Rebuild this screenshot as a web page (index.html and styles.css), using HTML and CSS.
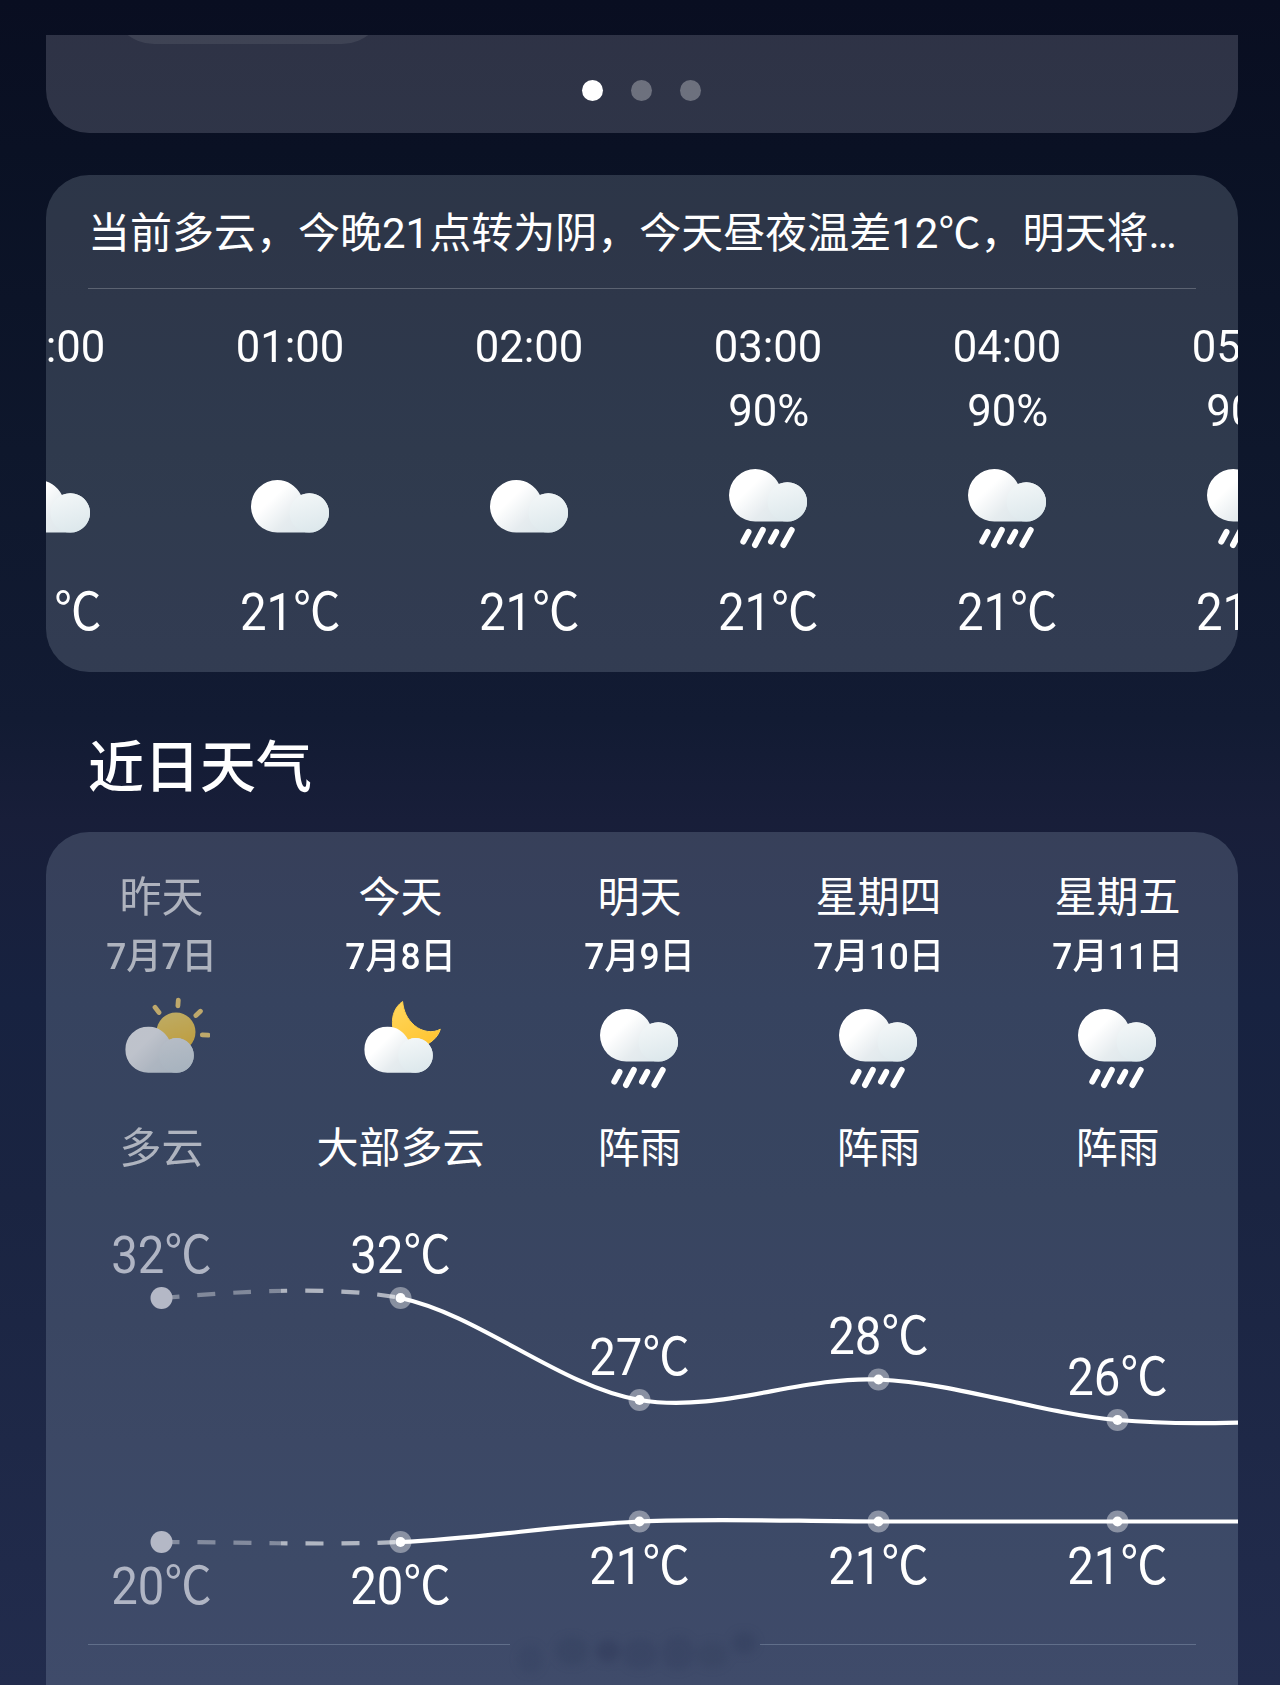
FILE: index.html
```html
<!DOCTYPE html>
<html lang="zh-CN">
<head>
  <meta charset="UTF-8">
  <meta name="viewport" content="width=device-width, initial-scale=1.0">
  <title>天气</title>
  <link rel="stylesheet" href="styles.css">
</head>
<body>
  <!-- Shared icon shapes -->
  <svg class="defs" width="0" height="0" aria-hidden="true">
    <defs>
      <linearGradient id="cloud-back" x1="0" y1="0.1" x2="1" y2="0.8">
        <stop offset="0.3" stop-color="#ffffff"/>
        <stop offset="0.62" stop-color="#e6ecef"/>
        <stop offset="1" stop-color="#d9e5ea"/>
      </linearGradient>
      <linearGradient id="cloud-front" x1="0.2" y1="0" x2="0.5" y2="1">
        <stop offset="0" stop-color="#f3f7f8"/>
        <stop offset="1" stop-color="#dde8ec"/>
      </linearGradient>
      <linearGradient id="moon-fill" x1="0" y1="0" x2="0.6" y2="1">
        <stop offset="0" stop-color="#ffd75e"/>
        <stop offset="1" stop-color="#ffc533"/>
      </linearGradient>
      <linearGradient id="sun-fill" x1="0" y1="0" x2="0.3" y2="1">
        <stop offset="0" stop-color="#ffdf6b"/>
        <stop offset="1" stop-color="#ffc933"/>
      </linearGradient>
      <linearGradient id="dash-fade" gradientUnits="userSpaceOnUse" x1="0" y1="0" x2="470" y2="0">
        <stop offset="0.5" stop-color="#fff" stop-opacity="0.36"/>
        <stop offset="0.5" stop-color="#fff" stop-opacity="0.6"/>
      </linearGradient>
      <symbol id="cloud" viewBox="0 0 78 53">
        <path d="M26.3 0a26.3 26.3 0 0 0 0 52.6H58.3a19.7 19.7 0 1 0-8.4-37.5A26.3 26.3 0 0 0 26.3 0z" fill="url(#cloud-back)"/>
        <circle cx="58.3" cy="32.9" r="19.7" fill="url(#cloud-front)"/>
      </symbol>
      <symbol id="icon-cloudy" viewBox="0 0 96 96">
        <use href="#cloud" x="8" y="26" width="78" height="53"/>
      </symbol>
      <symbol id="icon-rain" viewBox="0 0 96 96">
        <use href="#cloud" x="8" y="15" width="78" height="53"/>
        <path d="M27.5 78l-5.200 9.700M41.800 76l-7.800 15M55.200 78l-5.200 9.700M70.700 76l-8.300 15" stroke="#fff" stroke-width="6" stroke-linecap="round"/>
      </symbol>
      <symbol id="icon-night" viewBox="0 0 96 96">
        <path d="M49.600 7.500C42 13 38.800 21 39.500 31C41 48 54 55 67 53C78 50 85 43 87.300 35.200C80 39.500 69 38 61.500 31.500C54 25 50.500 17 49.600 7.500z" fill="url(#moon-fill)" stroke="#ffcf4a" stroke-width="1" stroke-linejoin="round"/>
        <use href="#cloud" x="11.200" y="32.500" width="68.700" height="46.600"/>
      </symbol>
      <symbol id="icon-day" viewBox="0 0 96 96">
        <circle cx="62" cy="38" r="19.500" fill="url(#sun-fill)"/>
        <path d="M64.300 6.200l-.4 5.600M41 13.300l4 5.200M86.400 17.200l-4.500 4.300M88.300 40.900l5.800.3" stroke="#ffd972" stroke-width="4.800" stroke-linecap="round"/>
        <use href="#cloud" x="11.200" y="32.500" width="68.700" height="46.600"/>
      </symbol>
    </defs>
  </svg>

  <section class="card card-top">
    <div class="pill"></div>
    <div class="dots">
      <span class="dot active"></span>
      <span class="dot"></span>
      <span class="dot"></span>
    </div>
  </section>

  <!-- Hourly forecast -->
  <section class="card card-hourly">
    <p class="summary">当前多云，今晚21点转为阴，今天昼夜温差12℃，明天将…</p>
    <div class="hours">
      <div class="hour">
        <div class="time">00:00</div>
        <div class="chance"></div>
        <svg class="icon"><use href="#icon-cloudy"/></svg>
        <div class="temp">21℃</div>
      </div>
      <div class="hour">
        <div class="time">01:00</div>
        <div class="chance"></div>
        <svg class="icon"><use href="#icon-cloudy"/></svg>
        <div class="temp">21℃</div>
      </div>
      <div class="hour">
        <div class="time">02:00</div>
        <div class="chance"></div>
        <svg class="icon"><use href="#icon-cloudy"/></svg>
        <div class="temp">21℃</div>
      </div>
      <div class="hour">
        <div class="time">03:00</div>
        <div class="chance">90%</div>
        <svg class="icon"><use href="#icon-rain"/></svg>
        <div class="temp">21℃</div>
      </div>
      <div class="hour">
        <div class="time">04:00</div>
        <div class="chance">90%</div>
        <svg class="icon"><use href="#icon-rain"/></svg>
        <div class="temp">21℃</div>
      </div>
      <div class="hour">
        <div class="time">05:00</div>
        <div class="chance">90%</div>
        <svg class="icon"><use href="#icon-rain"/></svg>
        <div class="temp">21℃</div>
      </div>
    </div>
  </section>

  <h2>近日天气</h2>

  <!-- Daily forecast -->
  <section class="card card-daily">
    <div class="days">
      <div class="day past">
        <div class="name">昨天</div>
        <div class="date">7月7日</div>
        <svg class="icon"><use href="#icon-day"/></svg>
        <div class="desc">多云</div>
      </div>
      <div class="day">
        <div class="name">今天</div>
        <div class="date">7月8日</div>
        <svg class="icon"><use href="#icon-night"/></svg>
        <div class="desc">大部多云</div>
      </div>
      <div class="day">
        <div class="name">明天</div>
        <div class="date">7月9日</div>
        <svg class="icon"><use href="#icon-rain"/></svg>
        <div class="desc">阵雨</div>
      </div>
      <div class="day">
        <div class="name">星期四</div>
        <div class="date">7月10日</div>
        <svg class="icon"><use href="#icon-rain"/></svg>
        <div class="desc">阵雨</div>
      </div>
      <div class="day">
        <div class="name">星期五</div>
        <div class="date">7月11日</div>
        <svg class="icon"><use href="#icon-rain"/></svg>
        <div class="desc">阵雨</div>
      </div>
    </div>

    <svg class="chart" viewBox="0 0 1192 443">
      <path class="line dashed" d="M115.500 98C155 95 275 83 354.500 98"/>
      <path class="line" d="M354.500 98C434 115 514 186.500 593.500 200S753 176 832.500 179.500S992 213 1071.500 220S1231 220 1310.500 220"/>
      <path class="line dashed" d="M115.500 342C195 342 275 345.400 354.500 342"/>
      <path class="line" d="M354.500 342C434 338.600 514 325 593.500 321.500S753 321.500 832.500 321.500H1192"/>

      <g class="points">
        <circle class="past-dot" cx="115.500" cy="98" r="11"/>
        <circle class="halo" cx="354.500" cy="98" r="11"/><circle cx="354.500" cy="98" r="5"/>
        <circle class="halo" cx="593.500" cy="200" r="11"/><circle cx="593.500" cy="200" r="5"/>
        <circle class="halo" cx="832.500" cy="179.500" r="11"/><circle cx="832.500" cy="179.500" r="5"/>
        <circle class="halo" cx="1071.500" cy="220" r="11"/><circle cx="1071.500" cy="220" r="5"/>
        <circle class="past-dot" cx="115.500" cy="342" r="11"/>
        <circle class="halo" cx="354.500" cy="342" r="11"/><circle cx="354.500" cy="342" r="5"/>
        <circle class="halo" cx="593.500" cy="321.500" r="11"/><circle cx="593.500" cy="321.500" r="5"/>
        <circle class="halo" cx="832.500" cy="321.500" r="11"/><circle cx="832.500" cy="321.500" r="5"/>
        <circle class="halo" cx="1071.500" cy="321.500" r="11"/><circle cx="1071.500" cy="321.500" r="5"/>
      </g>

      <g class="labels">
        <text class="past-label" x="115.500" y="73">32℃</text>
        <text x="354.500" y="73">32℃</text>
        <text x="593.500" y="175">27℃</text>
        <text x="832.500" y="154">28℃</text>
        <text x="1071.500" y="195">26℃</text>
        <text class="past-label" x="115.500" y="404">20℃</text>
        <text x="354.500" y="404">20℃</text>
        <text x="593.500" y="384">21℃</text>
        <text x="832.500" y="384">21℃</text>
        <text x="1071.500" y="384">21℃</text>
      </g>
    </svg>

    <div class="divider">
      <span class="rule"></span>
      <svg class="smudge" viewBox="0 0 250 50">
        <g fill="#2f3a59">
          <ellipse cx="20" cy="30" rx="12" ry="14" opacity=".22"/>
          <ellipse cx="62" cy="22" rx="16" ry="14" opacity=".3"/>
          <ellipse cx="98" cy="22" rx="12" ry="11" opacity=".5"/>
          <ellipse cx="130" cy="25" rx="18" ry="15" opacity=".28"/>
          <ellipse cx="168" cy="24" rx="16" ry="17" opacity=".28"/>
          <ellipse cx="202" cy="26" rx="16" ry="13" opacity=".25"/>
          <ellipse cx="234" cy="14" rx="12" ry="11" opacity=".35"/>
        </g>
      </svg>
      <span class="rule"></span>
    </div>
  </section>
</body>
</html>
```
FILE: styles.css
```css
* {
  box-sizing: border-box;
}
body {
  margin: 0;
  padding: 35px 42px 0 46px;
  height: 1685px;
  overflow: hidden;
  font-family: Roboto, "Noto Sans CJK SC", sans-serif;
  color: #fff;
  background: linear-gradient(#090e21 0, #0a1124 150px, #0e172c 450px, #121b33 720px, #181e39 820px, #172240 1000px, #1a2441 1200px, #222c4d 1685px);
}
.defs {
  position: absolute;
}
.card {
  background: rgba(225,240,255,0.16);
  border-radius: 43px;
  overflow: hidden;
}

/* tail of the card scrolled off the top */
.card-top {
  height: 98px;
  border-radius: 0 0 43px 43px;
  background: rgba(235,235,255,0.165);
}
.pill {
  width: 274px;
  height: 9px;
  margin-left: 65px;
  overflow: hidden;
}
.pill::before {
  content: "";
  display: block;
  height: 86px;
  margin-top: -77px;
  border-radius: 43px;
  background: rgba(255,255,255,0.08);
}
.dots {
  display: flex;
  justify-content: center;
  gap: 28px;
  margin: 36px 1px 0 0;
}
.dot {
  width: 21px;
  height: 21px;
  border-radius: 50%;
  background: rgba(255,255,255,0.3);
}
.dot.active {
  background: #fff;
}

.card-hourly {
  height: 497px;
  margin-top: 42px;
}
.summary {
  margin: 0 42px;
  height: 114px;
  line-height: 117px;
  font-size: 42px;
  white-space: nowrap;
  border-bottom: 1px solid rgba(255,255,255,0.22);
}
.hours {
  display: flex;
  margin-left: -114px;
  padding-top: 28px;
}
.hour, .day {
  flex: 0 0 239px;
  display: flex;
  flex-direction: column;
  align-items: center;
  white-space: nowrap;
}
.time, .chance {
  height: 60px;
  line-height: 60px;
  font-size: 45px;
  transform: scaleX(0.97);
}
.chance {
  margin-top: 4px;
}
.icon {
  width: 96px;
  height: 96px;
  margin-top: 13px;
}
.temp {
  margin-top: 33px;
  line-height: 60px;
  font-size: 52px;
  transform: scaleX(0.91);
}

h2 {
  margin: 56px 0 24px 42px;
  line-height: 80px;
  font-size: 56px;
  font-weight: 500;
}

.card-daily {
  height: 900px;
  border-radius: 43px 43px 0 0;
  background: rgba(215,235,255,0.165);
}
.days {
  display: flex;
  margin-left: -4px;
  padding-top: 36px;
}
.name, .desc {
  line-height: 60px;
  font-size: 42px;
}
.date {
  margin-top: 4px;
  line-height: 50px;
  font-size: 36px;
  font-weight: 500;
  transform: scaleX(0.98);
}
.day .icon {
  margin-top: 12px;
}
.desc {
  margin-top: 29px;
}
.past .name, .past .date, .past .desc {
  opacity: 0.6;
}
.past .icon {
  opacity: 0.68;
}

.chart {
  display: block;
  width: 1192px;
  height: 443px;
  margin-top: 21px;
}
.line {
  fill: none;
  stroke: #fff;
  stroke-width: 4.2;
}
.dashed {
  stroke: url(#dash-fade);
  stroke-dasharray: 18 18;
}
.points {
  fill: #fff;
}
.halo {
  fill: rgba(255,255,255,0.4);
}
.past-dot {
  fill: #b4b8c6;
}
.labels {
  fill: #fff;
  font-size: 52px;
  text-anchor: middle;
}
.labels text {
  transform: scaleX(0.91);
  transform-box: fill-box;
  transform-origin: center;
}
.labels .past-label {
  fill: #b0b5c4;
}

.divider {
  display: flex;
  align-items: flex-start;
  margin: 0 42px;
}
.rule {
  flex: 1;
  height: 1px;
  margin-top: 1px;
  background: rgba(200,220,240,0.25);
}
.rule:first-child {
  flex: 0 0 422px;
}
.smudge {
  width: 250px;
  height: 50px;
  margin-top: -14px;
  filter: blur(4px);
}
```
